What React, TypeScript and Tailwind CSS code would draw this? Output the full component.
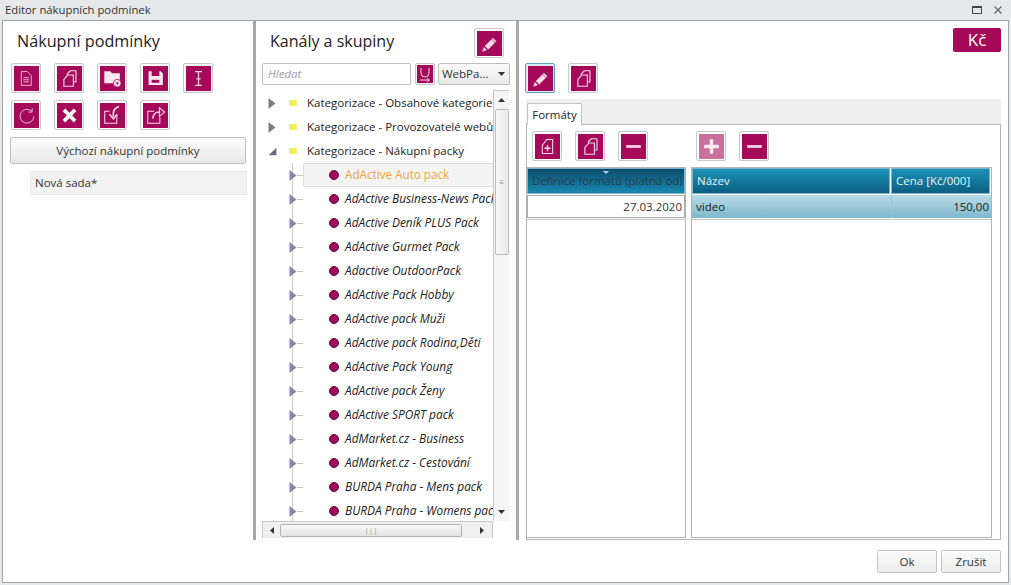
import type { ReactNode } from "react";

const icons: Record<string, ReactNode> = {
  doc: (
    <g fill="none" stroke="#f3cfe0" strokeWidth="1">
      <path d="M8.500 6.500h7l4.500 4.500v11.500h-11.500z" />
      <path d="M11 13.500h6.500M11 16h6.500M11 18.500h6.500" />
    </g>
  ),
  copy: (
    <g fill="none" stroke="#f6dbe8" strokeWidth="1.300" strokeLinejoin="round">
      <path d="M12 10.500V9l3.500-3.500H22v13h-3" />
      <path d="M8 15.500l4.500-5H19v13H8z" />
    </g>
  ),
  folderPlus: (
    <g>
      <path d="M5 6h7l2 2.500h9V20H5z" fill="#f8e8f0" />
      <circle cx="20" cy="20" r="4.500" fill="#f8e8f0" stroke="#a6085a" strokeWidth="1" />
      <path d="M18 20h4M20 18v4" stroke="#a6085a" strokeWidth="1" />
    </g>
  ),
  save: (
    <g>
      <path d="M6.500 6h3.500v5.500h9V6h1.500l2.500 2.500v13.500H6.500z" fill="#f8e8f0" />
      <path d="M10 16h9v3.500h-9z" fill="#a6085a" />
    </g>
  ),
  ibeam: <path d="M10.500 6.500h8M10.500 22.500h8M14.500 7v15M12 15h5" fill="none" stroke="#f3cfe0" strokeWidth="1.500" />,
  reload: (
    <g fill="none" stroke="#f3cfe0" strokeWidth="1">
      <path d="M20.500 9.500a8 8 0 1 0 2.500 6" />
      <path d="M21 6v4.500h-4.500" />
    </g>
  ),
  close: <path d="M8 8l13 13M21 8L8 21" fill="none" stroke="#ffffff" strokeWidth="4.200" />,
  importIn: (
    <g fill="none" stroke="#f6dbe8" strokeWidth="1.200">
      <path d="M11 9.500H5.500v14h14v-10" />
      <path d="M22 4c-4 1.500-6.500 4-6.500 8v4" strokeWidth="2" />
      <path d="M11 13l4.500 5.500 4.500-5.500" strokeWidth="1.700" />
    </g>
  ),
  exportOut: (
    <g fill="none" stroke="#f6dbe8" strokeWidth="1.200">
      <path d="M13 9.500H5.500v14h14v-7" />
      <path d="M11.500 18c0-4.500 3-7.500 7.500-7.500h1" strokeWidth="1.800" />
      <path d="M19 5.500l6 5-6 5z" strokeWidth="1.200" />
    </g>
  ),
  pencil: (
    <g>
      <path d="M9 17.500L18.500 8l4 4-9.500 9.500z" fill="#f6dbe8" />
      <path d="M8 18.500l-2 5.500 5.500-2z" fill="#f6dbe8" />
      <path d="M17 9.500l4 4" stroke="#a6085a" strokeWidth="0.800" />
    </g>
  ),
  docPlus: (
    <g fill="none" stroke="#f6dbe8" strokeWidth="1.200">
      <path d="M8.500 13l5-6.500h7v16h-12z" />
      <path d="M11 16.500h7M14.500 13v7" strokeWidth="1.700" />
    </g>
  ),
  minus: <path d="M6 14.500h17" stroke="#f3d5e3" strokeWidth="3.200" />,
  plus: <path d="M6 14.500h17M14.500 6v17" stroke="#f8eaf1" strokeWidth="4" />,
};

function IconButton({ icon, focused, faded }: { icon: string; focused?: boolean; faded?: boolean }) {
  return (
    <button
      className={
        focused
          ? "h-[30px] w-[30px] shrink-0 rounded-[2px] border border-[#5e9fc0] bg-[#d9ebf4] p-[1.500px]"
          : "h-[30px] w-[30px] shrink-0 rounded-[2px] border border-[#c8c8c8] bg-white p-[1.500px]"
      }
    >
      <svg
        viewBox="0 0 29 29"
        className={faded ? "block h-full w-full bg-[#c9709d]" : "block h-full w-full bg-[#a6085a]"}
      >
        {icons[icon]}
      </svg>
    </button>
  );
}

function Expander({ open, child }: { open?: boolean; child?: boolean }) {
  if (open) {
    return (
      <svg viewBox="0 0 8 10" className="h-[11px] w-[9px] shrink-0">
        <path d="M7.500 1.500v7h-7z" fill="#6c6c80" />
      </svg>
    );
  }
  return (
    <svg viewBox="0 0 8 12" className="h-[13px] w-[8px] shrink-0">
      <path d="M0.500 0.500l7 5.500-7 5.500z" fill={child ? "#8a84a8" : "#7d7a96"} />
    </svg>
  );
}

const groups = [
  { label: "Kategorizace - Obsahové kategorie" },
  { label: "Kategorizace - Provozovatelé webů" },
  { label: "Kategorizace - Nákupní packy", open: true },
];

const packs = [
  "AdActive Auto pack",
  "AdActive Business-News Pack",
  "AdActive Deník PLUS Pack",
  "AdActive Gurmet Pack",
  "Adactive OutdoorPack",
  "AdActive Pack Hobby",
  "AdActive pack Muži",
  "AdActive pack Rodina,Děti",
  "AdActive Pack Young",
  "AdActive pack Ženy",
  "AdActive SPORT pack",
  "AdMarket.cz - Business",
  "AdMarket.cz - Cestování",
  "BURDA Praha - Mens pack",
  "BURDA Praha - Womens pack",
];

function TreeGroup({ label, open }: { label: string; open?: boolean }) {
  return (
    <div className="flex h-6 items-center whitespace-nowrap pl-[5px]">
      <div className="flex w-[10px] shrink-0 justify-center">
        <Expander open={open} />
      </div>
      <div className="ml-[12px] h-[6px] w-[8px] shrink-0 rounded-[1px] bg-[#f4ef62]" />
      <span className="ml-[10px] shrink-0">{label}</span>
    </div>
  );
}

function TreePack({ label, index }: { label: string; index: number }) {
  const selected = index === 0;
  return (
    <div className="ml-[-4px] flex h-6 items-center whitespace-nowrap">
      <div className="flex w-[14px] shrink-0 items-center">
        <Expander child />
        <div className="h-px w-[6px] bg-[#c4c4c4]" />
      </div>
      <div
        className={
          selected
            ? "flex h-[24px] w-[400px] shrink-0 items-center rounded-[2px] border border-[#dcdcdc] bg-[#f4f4f4] pl-[25px]"
            : "flex h-[24px] w-[400px] shrink-0 items-center border border-transparent pl-[25px]"
        }
      >
        <div className="h-[10px] w-[10px] shrink-0 rounded-full border border-[#5c0a38] bg-[#a0085a]" />
        <span className={selected ? "ml-[6px] text-[11.700px] text-[#f0a635]" : "ml-[6px] text-[11.900px] italic text-[#222]"}>
          {label}
        </span>
      </div>
    </div>
  );
}

function ScrollArrow({ dir }: { dir: "up" | "down" | "left" | "right" }) {
  const d = { up: "M0 5l3.500-4 3.500 4z", down: "M0 1l3.500 4 3.500-4z", left: "M5 0L1 3.500 5 7z", right: "M1 0l4 3.500L1 7z" }[dir];
  return (
    <svg viewBox="0 0 7 7" className="h-[7px] w-[7px] shrink-0">
      <path d={d} fill="#333" />
    </svg>
  );
}

export default function App() {
  return (
    <div className="flex h-[585px] w-[1011px] flex-col overflow-hidden bg-[#e7e8e9] text-[11.500px] text-[#222] [font-family:'Open_Sans',sans-serif]">
      <div className="flex h-5 shrink-0 items-center justify-between pl-[5px] pr-[9px] text-[11.300px] text-[#333]">
        <span>Editor nákupních podmínek</span>
        <div className="flex items-center gap-[12px]">
          <div className="h-[8px] w-[10px] border border-t-2 border-[#444]" />
          <svg viewBox="0 0 8 8" className="h-[8px] w-[8px]">
            <path d="M0.500 0.500l7 7M7.500 0.500l-7 7" stroke="#666" strokeWidth="1.200" />
          </svg>
        </div>
      </div>

      <div className="mx-[2px] mb-[2px] flex flex-1 flex-col border border-[#a3a3a3] bg-white">
        <div className="flex h-[519px] shrink-0">
          {/* Nákupní podmínky */}
          <div className="flex w-[250px] shrink-0 flex-col">
            <div className="pl-[14px] pt-[8px] text-[16.200px] leading-[24px]">Nákupní podmínky</div>
            <div className="mt-[10px] flex w-[216px] flex-wrap gap-x-[13px] gap-y-[7px] pl-[8px]">
              {["doc", "copy", "folderPlus", "save", "ibeam", "reload", "close", "importIn", "exportOut"].map((name) => (
                <IconButton key={name} icon={name} />
              ))}
            </div>
            <button className="ml-[7px] mt-[7px] h-[27px] w-[236px] rounded-[2px] border border-[#bdbdbd] bg-gradient-to-b from-[#fbfbfb] to-[#e9e9e9] text-[#333]">
              Výchozí nákupní podmínky
            </button>
            <div className="ml-[27px] mt-[7px] flex h-[24px] w-[217px] items-center border border-[#e8e8e8] bg-[#f2f2f2] pl-[4px] text-[#333]">
              Nová sada*
            </div>
          </div>
          <div className="w-[3px] shrink-0 bg-[#a8a8a8]" />

          {/* Kanály a skupiny */}
          <div className="flex w-[260px] shrink-0 flex-col">
            <div className="flex h-[39px] shrink-0 items-start justify-between pl-[14px] pr-[12px]">
              <span className="mt-[8px] text-[16px] leading-[24px]">Kanály a skupiny</span>
              <div className="mt-[7px]">
                <IconButton icon="pencil" />
              </div>
            </div>
            <div className="mt-[3px] flex h-[22px] shrink-0 pl-[6px]">
              <div className="flex w-[149px] items-center rounded-[2px] border border-[#bdbdbd] pl-[5px] italic text-[#a0a0a0]">
                Hledat
              </div>
              <div className="ml-[4px] h-[22px] w-[20px] rounded-[2px] border border-[#c8c8c8] p-[1px]">
                <svg viewBox="0 0 16 18" className="block h-full w-full bg-[#a6085a]">
                  <path d="M4 3v5a4 4 0 0 0 8 0V3M3 15h9M10 13l2.500 2-2.500 2" fill="none" stroke="#f6dbe8" strokeWidth="1" />
                </svg>
              </div>
              <div className="ml-[3px] flex w-[72px] items-center justify-between rounded-[2px] border border-[#bdbdbd] bg-gradient-to-b from-[#fbfbfb] to-[#e9e9e9] pl-[3px] pr-[4px] text-[#333]">
                <span>WebPa...</span>
                <ScrollArrow dir="down" />
              </div>
            </div>

            <div className="mt-[5px] flex h-[450px] flex-col pl-[6px]">
              <div className="flex h-[431px] shrink-0">
                <div className="w-[231px] shrink-0 overflow-hidden pt-px">
                  {groups.map((g) => (
                    <TreeGroup key={g.label} label={g.label} open={g.open} />
                  ))}
                  <div className="ml-[30px] border-l border-[#c9c9c9]">
                    {packs.map((p, i) => (
                      <TreePack key={p} label={p} index={i} />
                    ))}
                  </div>
                </div>
                <div className="flex w-[16px] shrink-0 flex-col items-center border-l border-t border-[#c8c8c8] bg-[#f5f5f5]">
                  <div className="flex h-[18px] shrink-0 items-center"><ScrollArrow dir="up" /></div>
                  <div className="flex h-[146px] w-[14px] shrink-0 items-center justify-center rounded-[2px] border border-[#bdbdbd] bg-gradient-to-r from-[#fafafa] to-[#e8e8e8] text-[8px] leading-none text-[#999]">
                    ≡
                  </div>
                  <div className="flex-1" />
                  <div className="flex h-[17px] shrink-0 items-center"><ScrollArrow dir="down" /></div>
                </div>
              </div>
              <div className="flex h-[17px] w-[231px] items-center gap-[4px] border border-b-0 border-[#c8c8c8] bg-[#f0f0f0] px-[6px]">
                <ScrollArrow dir="left" />
                <div className="flex h-[13px] w-[182px] items-center justify-center rounded-[2px] border border-[#b5b5b5] bg-gradient-to-b from-[#f8f8f8] to-[#e4e4e4] text-[8px] leading-none text-[#999]">
                  |||
                </div>
                <div className="flex-1" />
                <ScrollArrow dir="right" />
              </div>
            </div>
          </div>
          <div className="w-[3px] shrink-0 bg-[#a8a8a8]" />

          {/* Formáty */}
          <div className="flex flex-1 flex-col pl-[7px]">
            <div className="flex h-[42px] shrink-0 justify-end pr-[7px] pt-[7px]">
              <div className="flex h-[24px] w-[48px] items-center justify-center rounded-[2px] bg-[#a6085a] text-[17px] text-white">
                Kč
              </div>
            </div>
            <div className="ml-[-1px] flex gap-[13px]">
              <IconButton icon="pencil" focused />
              <IconButton icon="copy" />
            </div>
            <div className="mt-[6px] flex h-[26px] w-[475px] shrink-0 items-end border-b border-[#b4b4b4] bg-[#efefef] pl-[1px]">
              <div className="mb-[-1px] flex h-[22px] w-[55px] items-center justify-center rounded-t-[2px] border border-b-0 border-[#c4c4c4] bg-white">
                Formáty
              </div>
            </div>
            <div className="flex h-[415px] w-[475px] flex-col border-x border-b border-[#b4b4b4]">
              <div className="flex pl-[5px] pt-[6px]">
                <div className="flex gap-[13px]">
                  <IconButton icon="docPlus" />
                  <IconButton icon="copy" />
                  <IconButton icon="minus" />
                </div>
                <div className="ml-[48px] flex gap-[13px]">
                  <IconButton icon="plus" faded />
                  <IconButton icon="minus" />
                </div>
              </div>
              <div className="mt-[6px] flex flex-1 pb-[1px]">
                <div className="ml-[-1px] flex w-[160px] shrink-0 flex-col border border-[#b4b4b4]">
                  <div className="relative flex h-[26px] items-center overflow-hidden whitespace-nowrap border border-[#7fb4cb] bg-gradient-to-b from-[#0a4d6e] to-[#1a8ab0] pl-[4px] text-[#27404c]">
                    Definice formátů (platná od)
                    <svg viewBox="0 0 6 3" className="absolute left-[75px] top-[2px] h-[3px] w-[6px]">
                      <path d="M0 0h6L3 3z" fill="#b8d8e6" />
                    </svg>
                  </div>
                  <div className="mt-px flex h-[23px] items-center justify-end border border-[#a9a9a9] pr-[2px] pt-px text-[#333]">
                    27.03.2020
                  </div>
                  <div className="mt-px border-t border-[#c8c8c8]" />
                </div>
                <div className="ml-[5px] flex w-[301px] shrink-0 flex-col border border-[#b4b4b4]">
                  <div className="flex gap-px">
                    <div className="flex h-[26px] w-[198px] items-center border border-[#7fb4cb] bg-gradient-to-b from-[#1c92b8] to-[#0c5f82] pl-[4px] text-[#e8f3f8]">
                      Název
                    </div>
                    <div className="flex h-[26px] w-[99px] items-center whitespace-nowrap border border-[#7fb4cb] bg-gradient-to-b from-[#1c92b8] to-[#0c5f82] pl-[4px] text-[#e8f3f8]">
                      Cena [Kč/000]
                    </div>
                  </div>
                  <div className="mt-px flex h-[23px] bg-gradient-to-b from-[#b9dbe7] to-[#7fb8cd] pt-px">
                    <div className="flex w-[199px] items-center pl-[4px]">video</div>
                    <div className="flex w-[99px] items-center justify-end border-l border-[#9fc2d0] pr-[1px]">150,00</div>
                  </div>
                  <div className="mt-px border-t border-[#c8c8c8]" />
                </div>
              </div>
            </div>
          </div>
        </div>

        <div className="flex flex-1 items-start justify-end gap-[4px] pr-[7px] pt-[10px]">
          <button className="h-[23px] w-[60px] rounded-[2px] border border-[#c4c4c4] bg-gradient-to-b from-[#fbfbfb] to-[#ececec] text-[#333]">
            Ok
          </button>
          <button className="h-[23px] w-[60px] rounded-[2px] border border-[#c4c4c4] bg-gradient-to-b from-[#fbfbfb] to-[#ececec] text-[#333]">
            Zrušit
          </button>
        </div>
      </div>
    </div>
  );
}
